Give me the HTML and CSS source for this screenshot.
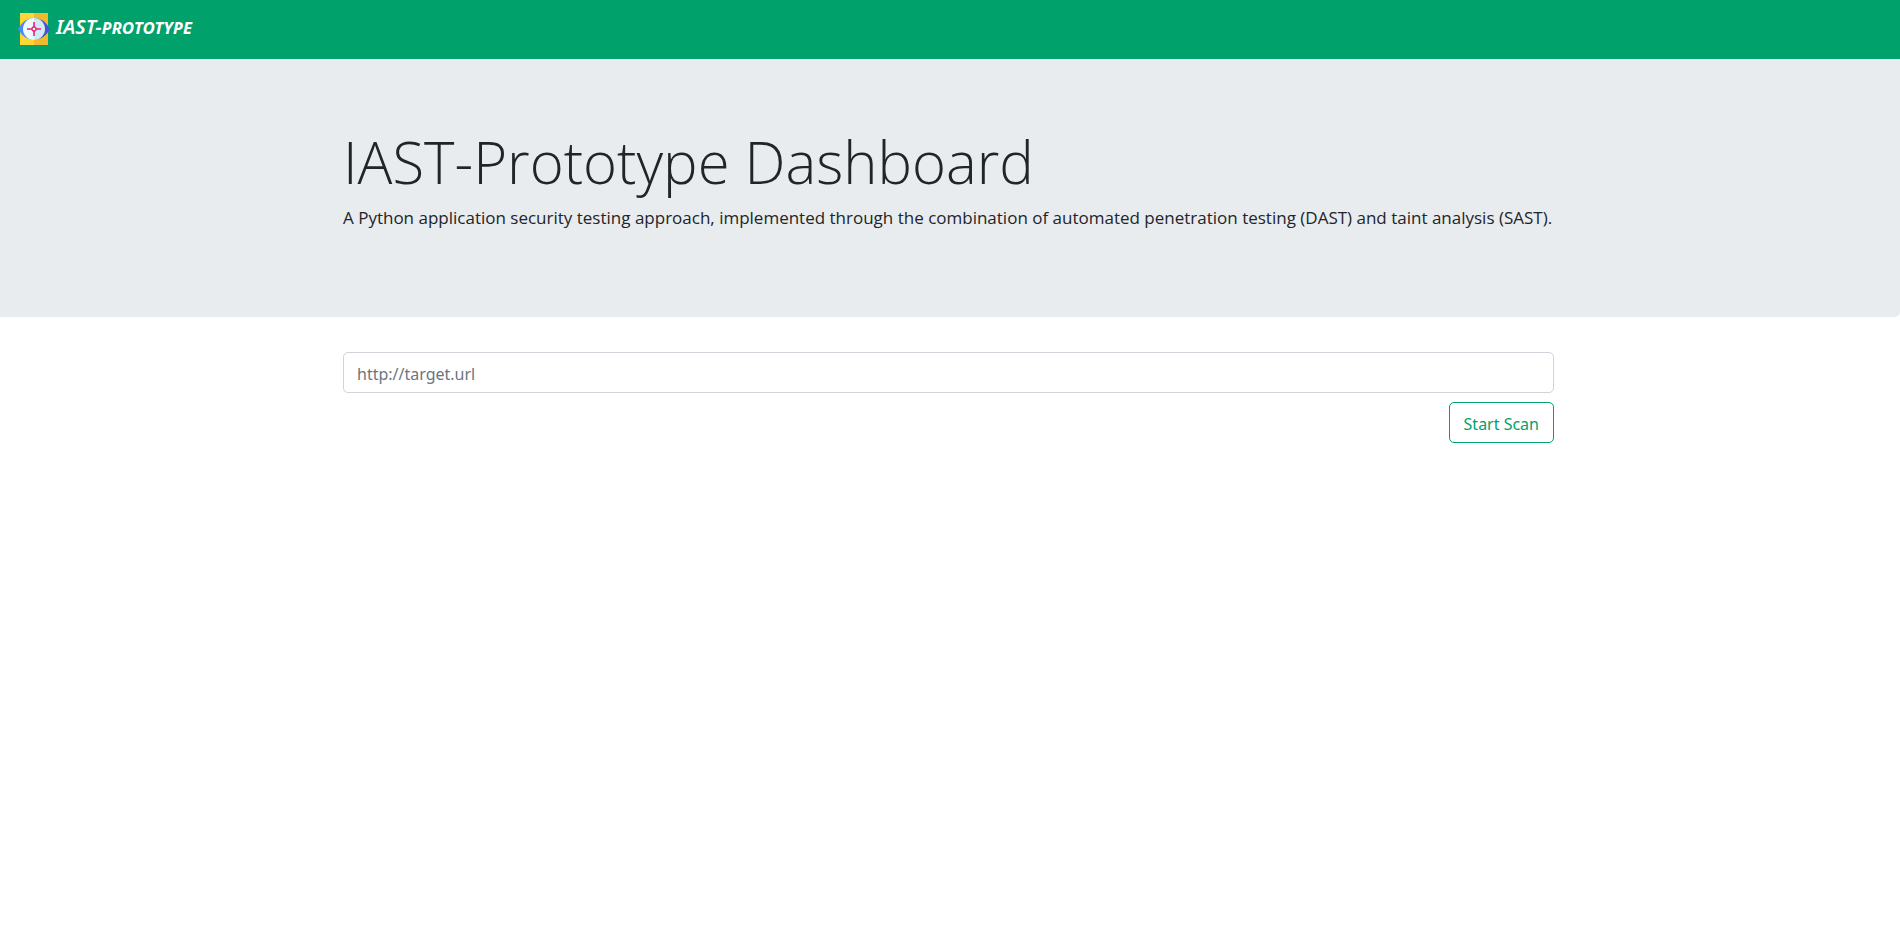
FILE: index.html
```html
<!DOCTYPE html>
<html lang="en">
<head>
<meta charset="utf-8">
<title>IAST-Prototype</title>
<link rel="stylesheet" href="styles.css">
</head>
<body>
<nav class="navbar">
  <a class="brand" href="#">
    <svg class="logo" viewBox="0 0 32 32" aria-hidden="true">
      <path fill="#fdd835" d="M2 0h14v32H2z"/>
      <path fill="#f3b92c" d="M16 0h14v32H16z"/>
      <path fill="#448aff" d="M0 16Q6 5 16 5v22Q6 27 0 16z"/>
      <path fill="#4653cf" d="M32 16Q26 5 16 5v22Q26 27 32 16z"/>
      <path fill="#eefaff" d="M16 5a11 11 0 0 0 0 22z"/>
      <path fill="#cfeaf6" d="M16 5a11 11 0 0 1 0 22z"/>
      <path d="M16 9v5M16 18v5M9 16h5M18 16h5" stroke="#e9207c" stroke-width="1.6"/>
      <circle cx="16" cy="16" r="2" fill="#fff" stroke="#e9207c" stroke-width="1.3"/>
    </svg>
    <span class="brand-name">IAST-prototype</span>
  </a>
</nav>
<header class="hero">
  <div class="container">
    <h1 class="title">IAST-Prototype Dashboard</h1>
    <p class="lead">A Python application security testing approach, implemented through the combination of automated penetration testing (DAST) and taint analysis (SAST).</p>
  </div>
</header>
<main class="container">
  <form class="scan">
    <input class="field" type="text" aria-label="Target URL" placeholder="http://target.url">
    <button class="button" type="button">Start Scan</button>
  </form>
</main>
</body>
</html>
```

FILE: styles.css
```css
* { box-sizing: border-box; }
body {
  margin: 0;
  background: #fff;
  color: #212529;
  font: 16px/26px "Noto Sans", "Open Sans", sans-serif;
}
.navbar {
  display: flex;
  padding: 12px 18px 14px;
  background: #00a16a;
}
.brand {
  display: flex;
  align-items: center;
  gap: 6px;
  height: 33px;
  color: #fff;
  font-size: 20px;
  font-style: italic;
  font-weight: 600;
  font-variant: small-caps;
  text-decoration: none;
}
.brand-name { padding-bottom: 4px; }
.logo { width: 32px; height: 32px; }
.container {
  width: 100%;
  max-width: 1214px;
  margin: 0 auto;
  padding-right: 3px;
}
.hero {
  padding: 68px 0 69px;
  margin-bottom: 35px;
  background: #e8ecef;
  border-radius: 0 0 5px 0;
}
.title {
  margin: 0 0 8px;
  font-family: "Open Sans", sans-serif;
  font-size: 58px;
  line-height: 70px;
  font-weight: 300;
}
.lead {
  margin: 0 0 17px;
  font-family: "Open Sans", sans-serif;
  font-size: 17px;
}
.scan {
  display: flex;
  flex-direction: column;
  align-items: flex-end;
  gap: 9px;
}
.field, .button {
  height: 41px;
  border: 1px solid #ced4da;
  border-radius: 5px;
  background: #fff;
  font: inherit;
}
.field { width: 100%; padding: 2px 13px 0; color: #495057; }
.field::placeholder { color: #6c757d; opacity: 1; }
.button { padding: 2px 14px 0; border-color: #00a16a; color: #00a16a; cursor: pointer; }
```
